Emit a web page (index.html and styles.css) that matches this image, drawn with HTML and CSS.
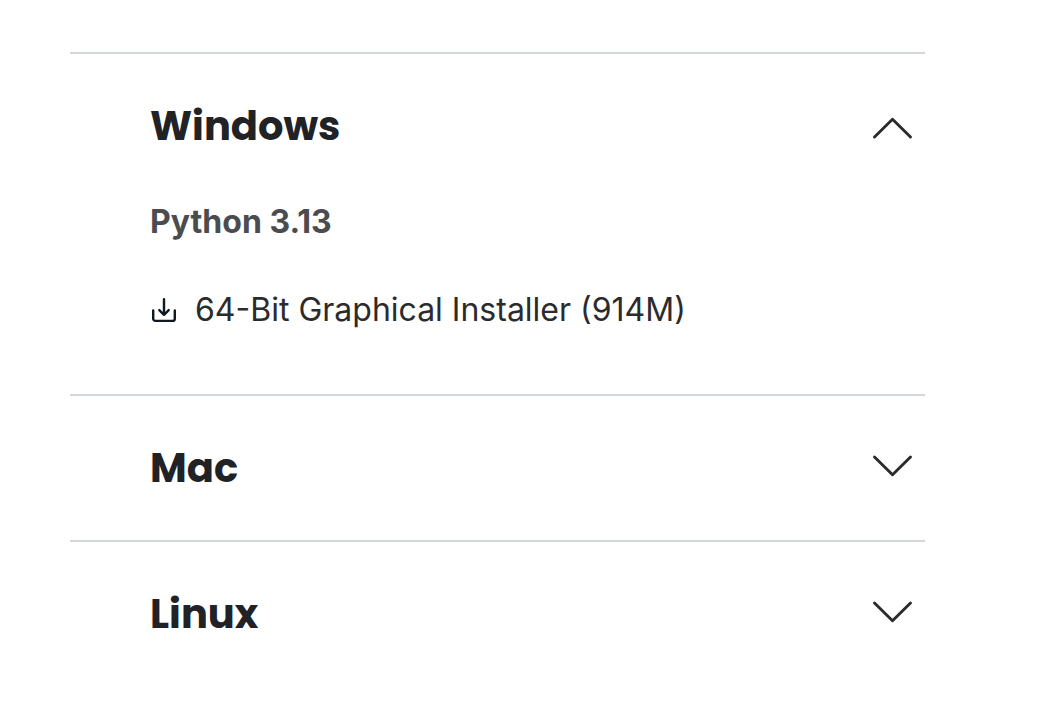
FILE: index.html
```html
<!DOCTYPE html>
<html lang="en">
<head>
<meta charset="utf-8">
<title>Installers</title>
<link rel="stylesheet" href="styles.css">
</head>
<body>
<main class="accordion">
  <section class="panel panel-open">
    <header class="panel-header">
      <h2 class="title">Windows</h2>
      <svg class="chevron chevron-up" viewBox="0 0 40 22"><path d="M2.500 20 20.500 2.300 38.500 20"/></svg>
    </header>
    <h3 class="version">Python 3.13</h3>
    <a class="download">
      <svg class="download-icon" viewBox="0 0 24 24"><path d="M1.200 12.500v8.200a2.200 2.200 0 0 0 2.200 2.200h17.200a2.200 2.200 0 0 0 2.200-2.200v-8.200M12 1.200v15.500M7.300 12.100l4.700 4.700 4.700-4.700"/></svg>
      <span class="download-label">64-Bit Graphical Installer (914M)</span>
    </a>
  </section>
  <section class="panel">
    <header class="panel-header">
      <h2 class="title">Mac</h2>
      <svg class="chevron" viewBox="0 0 40 22"><path d="M2.500 2 20.500 19.700 38.500 2"/></svg>
    </header>
  </section>
  <section class="panel">
    <header class="panel-header">
      <h2 class="title">Linux</h2>
      <svg class="chevron" viewBox="0 0 40 22"><path d="M2.500 2 20.500 19.700 38.500 2"/></svg>
    </header>
  </section>
</main>
</body>
</html>
```
FILE: styles.css
```css
* { box-sizing: border-box; }
body { margin: 0; background: #fff; color: #2b2b2d; font-family: Inter, "Liberation Sans", sans-serif; }
.accordion { width: 855px; margin: 52px 0 0 70px; }
.panel { height: 146px; border-top: 2px solid #d3d7dc; padding: 42px 13px 0 80px; }
.panel-open { height: 342px; }
.panel-header { display: flex; justify-content: space-between; height: 60px; }
.title { margin: 0; font: 700 40px/60px Poppins, Inter, sans-serif; color: #202226; white-space: nowrap; }
.chevron { width: 40px; height: 22px; margin-top: 17px; overflow: visible; fill: none; stroke: #2b2b2d; stroke-width: 2.900; stroke-linecap: round; stroke-linejoin: round; }
.chevron-up { margin-top: 21px; }
.version { margin: 42px 0 0; font-size: 32px; line-height: 48px; font-weight: 700; color: #4a4c50; }
.download { display: flex; align-items: center; margin-top: 40px; height: 48px; }
.download-icon { width: 24px; height: 24px; margin: 0 19px 0 2px; overflow: visible; fill: none; stroke: #101820; stroke-width: 2.400; stroke-linecap: round; stroke-linejoin: round; }
.download-label { font-size: 32px; line-height: 48px; white-space: nowrap; }
```
